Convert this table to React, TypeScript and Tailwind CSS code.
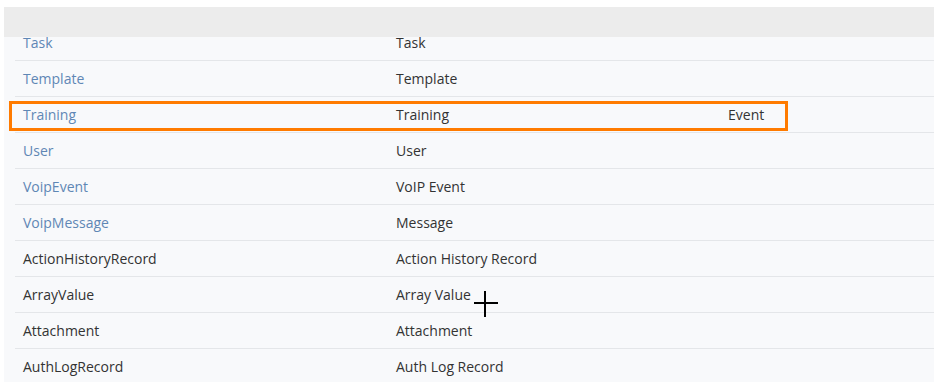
import React from "react";

type Row = { name: string; caption: string; extra?: string; link?: boolean; selected?: boolean };

const rows: Row[] = [
  { name: "Task", caption: "Task", link: true },
  { name: "Template", caption: "Template", link: true },
  { name: "Training", caption: "Training", extra: "Event", link: true, selected: true },
  { name: "User", caption: "User", link: true },
  { name: "VoipEvent", caption: "VoIP Event", link: true },
  { name: "VoipMessage", caption: "Message", link: true },
  { name: "ActionHistoryRecord", caption: "Action History Record" },
  { name: "ArrayValue", caption: "Array Value" },
  { name: "Attachment", caption: "Attachment" },
  { name: "AuthLogRecord", caption: "Auth Log Record" },
];

export default function App() {
  return (
    <div
      className="relative w-[936px] h-[382px] overflow-hidden bg-white pt-[7px] pl-[4px] pr-[2px]"
      style={{ fontFamily: '"Open Sans", "Noto Sans", sans-serif' }}
    >
      <div className="flex flex-col h-[375px] bg-[#f8f9fb]">
        <div className="h-[30px] shrink-0 bg-[#ececec] relative z-10" />
        <div className="flex-1 overflow-hidden">
          <div className="mt-[-12px] pl-[11px]">
            {rows.map((r) => (
              <div
                key={r.name}
                className="relative flex items-center h-[36px] border-b border-[#e4e6e9] text-[14px] text-[#333333]"
              >
                <div className={`w-[381px] pl-[8px] ${r.link ? "text-[#5f87b5]" : ""}`}>{r.name}</div>
                <div className="w-[332px]">{r.caption}</div>
                <div>{r.extra ?? ""}</div>
                {r.selected && (
                  <div className="absolute left-[-6px] top-[4px] w-[779px] h-[30px] border-[3px] border-[#ff7b00]" />
                )}
              </div>
            ))}
          </div>
        </div>
      </div>
      {/* crosshair pointer */}
      <div className="absolute left-[474px] top-[302px] w-[24px] h-[2px] bg-black" />
      <div className="absolute left-[484px] top-[291px] w-[2px] h-[26px] bg-black" />
    </div>
  );
}
